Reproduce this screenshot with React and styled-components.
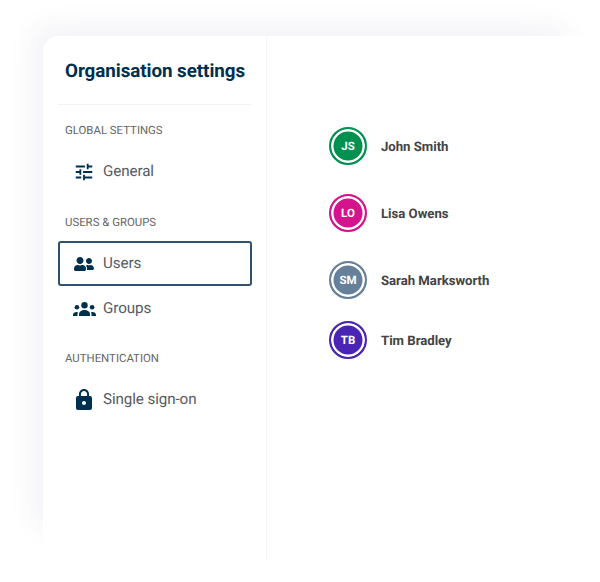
import React from 'react'
import styled, { createGlobalStyle } from 'styled-components'
import { MdTune, MdLock } from 'react-icons/md'
import { FaUserFriends } from 'react-icons/fa'

const GlobalStyle = createGlobalStyle`
html, body {
  margin: 0;
  background: #fff;
}
body {
  font-family: Roboto, "Liberation Sans", sans-serif;
  text-rendering: geometricPrecision;
}
`

const Page = styled.div`
width: 600px;
height: 582px;
box-sizing: border-box;
padding: 36px 0 22px 43px;
overflow: hidden;
position: relative;
`
const Shadow = styled.div`
position: absolute;
left: 43px;
top: 36px;
width: 530px;
height: 500px;
border-radius: 16px;
box-shadow: -8px -8px 30px rgba(60, 60, 130, 0.07);
`
const Card = styled.div`
position: relative;
width: 557px;
height: 100%;
display: flex;
background: #fff;
border-radius: 16px 0 0 0;
`
const Sidebar = styled.nav`
width: 224px;
box-sizing: border-box;
padding: 0 14px 0 15px;
border-right: 1px solid #f5f5f9;
`
const Heading = styled.h1`
margin: 0;
padding: 23px 7px 0;
height: 69px;
box-sizing: border-box;
border-bottom: 1px solid #f3f3f6;
font-size: 18.8px;
line-height: 24px;
letter-spacing: -0.05px;
font-weight: 700;
color: #00304f;
white-space: nowrap;
`
const SectionLabel = styled.div`
padding: 0 7px;
margin-top: ${p => p.$top}px;
font-size: 11.4px;
line-height: 16px;
color: #666;
text-transform: uppercase;
`
const NavItem = styled.a`
display: flex;
align-items: center;
box-sizing: border-box;
width: 194px;
height: 45px;
margin-top: ${p => p.$top}px;
border: 2px solid ${p => (p.$active ? '#2f5270' : 'transparent')};
border-radius: 3px;
color: #555b63;
`
const NavText = styled.span`
padding-bottom: 2px;
font-size: 15.2px;
letter-spacing: -0.1px;
`
const IconSlot = styled.span`
display: flex;
justify-content: center;
width: 52px;
margin-left: -2px;
margin-right: -7px;
font-size: ${p => p.$size}px;
color: #00304f;
`
const Content = styled.main`
flex: 1;
padding: 91px 0 0 62px;
`
const UserRow = styled.div`
display: flex;
align-items: center;
gap: 14px;
height: 38px;
margin-bottom: ${p => p.$gap}px;
`
const Avatar = styled.div`
box-sizing: border-box;
width: 38px;
height: 38px;
display: flex;
align-items: center;
justify-content: center;
border-radius: 50%;
border: 2px solid ${p => p.$color};
background: ${p => p.$color};
box-shadow: inset 0 0 0 2.5px #fff;
color: #fff;
font-size: 11.5px;
font-weight: 700;
`
const UserName = styled.span`
padding-top: 2px;
font-size: 13.2px;
letter-spacing: -0.03px;
font-weight: 700;
color: #444;
`

const users = [
  { initials: 'JS', name: 'John Smith', color: '#00904f', gap: 29 },
  { initials: 'LO', name: 'Lisa Owens', color: '#d4148c', gap: 29 },
  { initials: 'SM', name: 'Sarah Marksworth', color: '#668099', gap: 22 },
  { initials: 'TB', name: 'Tim Bradley', color: '#4a24b4', gap: 0 }
]

function GroupsIcon () {
  return (
    <svg width="23" height="14" viewBox="0 0 23 14" fill="currentColor">
      <circle cx="11.5" cy="3.2" r="3.2" />
      <circle cx="3.9" cy="5.2" r="2.3" />
      <circle cx="19.1" cy="5.2" r="2.3" />
      <path d="M6 14v-1.6C6 9.8 8.5 8 11.5 8S17 9.8 17 12.4V14z" />
      <path d="M0 14v-1c0-1.7 1.6-3 3.6-3 .5 0 .9.1 1.3.2-.3.7-.4 1.4-.4 2.2V14z" />
      <path d="M23 14v-1c0-1.7-1.6-3-3.6-3-.5 0-.9.1-1.3.2.3.7.4 1.4.4 2.2V14z" />
    </svg>
  )
}

export default function App () {
  return (
    <Page>
      <GlobalStyle />
      <Shadow />
      <Card>
        <Sidebar>
          <Heading>Organisation settings</Heading>
          <SectionLabel $top={17}>Global settings</SectionLabel>
          <NavItem $top={11}><IconSlot $size={22}><MdTune /></IconSlot><NavText>General</NavText></NavItem>
          <SectionLabel $top={20}>Users &amp; groups</SectionLabel>
          <NavItem $active $top={11}><IconSlot $size={20}><FaUserFriends /></IconSlot><NavText>Users</NavText></NavItem>
          <NavItem $top={0}><IconSlot $size={23}><GroupsIcon /></IconSlot><NavText>Groups</NavText></NavItem>
          <SectionLabel $top={19}>Authentication</SectionLabel>
          <NavItem $top={11}><IconSlot $size={24}><MdLock /></IconSlot><NavText>Single sign-on</NavText></NavItem>
        </Sidebar>
        <Content>
          {users.map(user => (
            <UserRow key={user.initials} $gap={user.gap}>
              <Avatar $color={user.color}>{user.initials}</Avatar>
              <UserName>{user.name}</UserName>
            </UserRow>
          ))}
        </Content>
      </Card>
    </Page>
  )
}
